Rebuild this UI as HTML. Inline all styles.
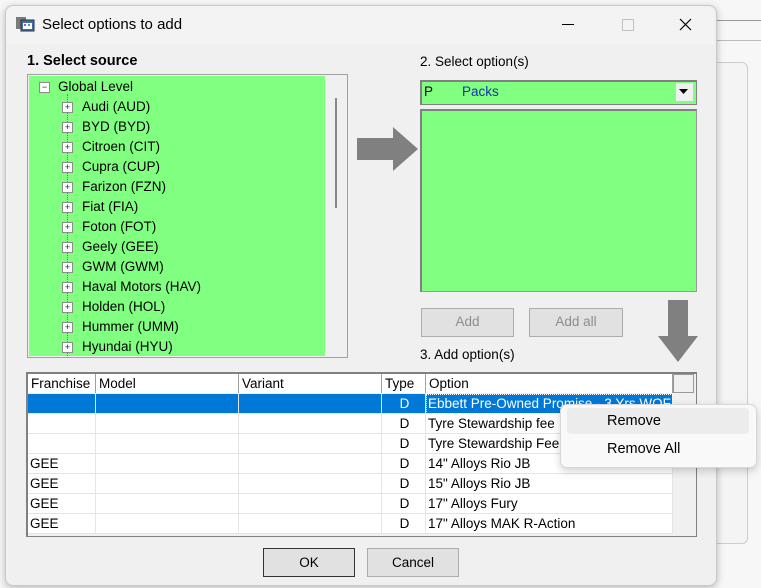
<!DOCTYPE html>
<html><head><style>
body{margin:0;width:761px;height:588px;background:#f7f7f7;position:relative;overflow:hidden;font-family:"Liberation Sans",sans-serif;font-size:13.5px;color:#000}
.a{position:absolute}
.dlg{left:5px;top:5px;width:710px;height:579px;background:#f0f0f0;border:1px solid #c8c8c8;border-radius:8px;box-shadow:0 2px 8px rgba(0,0,0,.25)}
.tree div{position:absolute;white-space:nowrap}
.pb{position:absolute;width:9px;height:9px;border:1px solid #8c8c8c;background:#fff;font-size:9px;line-height:9px;text-align:center;color:#224}
.btn{position:absolute;background:#e1e1e1;border:1px solid #adadad;text-align:center;line-height:26px}
.hd{position:absolute;top:0;height:19px;line-height:19px;border-right:1px solid #a0a0a0;padding-left:3px;box-sizing:border-box;background:#fff}
.row{position:absolute;left:0;width:645px;height:20px;border-bottom:1px solid #e4e4e4;box-sizing:border-box}
.c{position:absolute;top:0;height:20px;line-height:20px;border-right:1px solid #e4e4e4;box-sizing:border-box;padding-left:2px;white-space:nowrap;overflow:hidden}
</style></head><body>
<div class="a" style="left:716px;top:20px;width:45px;height:1px;background:#999"></div>
<div class="a" style="left:716px;top:40px;width:45px;height:1px;background:#bbb"></div>
<div class="a" style="left:700px;top:62px;width:46px;height:480px;background:#f4f4f4;border:1px solid #ccc;border-radius:6px"></div>
<div class="a dlg"></div>
<div class="a" style="left:6px;top:6px;width:708px;height:38px;background:#f3f3f3;border-radius:8px 8px 0 0"></div>
<svg class="a" style="left:15px;top:15px" width="20" height="18"><rect x="1" y="2" width="10" height="12" fill="#7a7a7a"/><rect x="6" y="5" width="13" height="11" fill="#3a6fb0" stroke="#333"/><rect x="8" y="8" width="9" height="6" fill="#fff"/><rect x="9" y="9" width="2" height="2" fill="#d040a0"/><rect x="13" y="9" width="2" height="2" fill="#40a0d0"/></svg>
<div class="a" style="left:42px;top:16px;font-size:15px">Select options to add</div>
<div class="a" style="left:562px;top:24px;width:12px;height:1px;background:#000"></div>
<div class="a" style="left:622px;top:19px;width:10px;height:10px;border:1px solid #c0c0c0"></div>
<svg class="a" style="left:679px;top:18px" width="13" height="13"><path d="M1 1L12 12M12 1L1 12" stroke="#000" stroke-width="1.2"/></svg>

<div class="a" style="left:27px;top:53px;font-weight:bold;font-size:14.5px">1. Select source</div>
<div class="a" style="left:27px;top:74px;width:319px;height:282px;border:1px solid #a0a0a0;background:#f0f0f0"></div>
<div class="a tree" style="left:29px;top:76px;width:296px;height:280px;background:#80ff80">
<div class="pb" style="left:10px;top:6px">−</div><div style="left:29px;top:3px">Global Level</div>
<div class="a" style="left:38px;top:18px;height:262px;border-left:1px dotted #777"></div>
</div>
<div class="a" style="left:335px;top:98px;width:2px;height:110px;background:#888"></div>
<div class="a tree" style="left:29px;top:76px">
<div class="pb" style="left:33px;top:26px">+</div><div style="left:53px;top:23px">Audi (AUD)</div>
<div class="pb" style="left:33px;top:46px">+</div><div style="left:53px;top:43px">BYD (BYD)</div>
<div class="pb" style="left:33px;top:66px">+</div><div style="left:53px;top:63px">Citroen (CIT)</div>
<div class="pb" style="left:33px;top:86px">+</div><div style="left:53px;top:83px">Cupra (CUP)</div>
<div class="pb" style="left:33px;top:106px">+</div><div style="left:53px;top:103px">Farizon (FZN)</div>
<div class="pb" style="left:33px;top:126px">+</div><div style="left:53px;top:123px">Fiat (FIA)</div>
<div class="pb" style="left:33px;top:146px">+</div><div style="left:53px;top:143px">Foton (FOT)</div>
<div class="pb" style="left:33px;top:166px">+</div><div style="left:53px;top:163px">Geely (GEE)</div>
<div class="pb" style="left:33px;top:186px">+</div><div style="left:53px;top:183px">GWM (GWM)</div>
<div class="pb" style="left:33px;top:206px">+</div><div style="left:53px;top:203px">Haval Motors (HAV)</div>
<div class="pb" style="left:33px;top:226px">+</div><div style="left:53px;top:223px">Holden (HOL)</div>
<div class="pb" style="left:33px;top:246px">+</div><div style="left:53px;top:243px">Hummer (UMM)</div>
<div class="pb" style="left:33px;top:266px">+</div><div style="left:53px;top:263px">Hyundai (HYU)</div>
</div>

<svg class="a" style="left:357px;top:127px" width="62" height="45"><path d="M0 11H36V0L61 22L36 44V33H0Z" fill="#808080"/></svg>
<svg class="a" style="left:657px;top:300px" width="42" height="63"><path d="M11 0H31V36H41L21 62L1 36H11Z" fill="#808080"/></svg>

<div class="a" style="left:420px;top:54px">2. Select option(s)</div>
<div class="a" style="left:420px;top:80px;width:274px;height:22px;border:1px solid #808080;border-top-width:2px;border-left-width:2px;background:#80ff80"></div>
<div class="a" style="left:424px;top:84px">P</div>
<div class="a" style="left:462px;top:84px;color:#1a33b0">Packs</div>
<div class="a" style="left:675px;top:83px;width:17px;height:18px;background:#f0f0f0;border-left:1px solid #ccc"></div>
<svg class="a" style="left:679px;top:89px" width="10" height="6"><path d="M0 0H9L4.5 5Z" fill="#000"/></svg>
<div class="a" style="left:420px;top:109px;width:274px;height:180px;border:1px solid #999;border-top:2px solid #808080;border-left:2px solid #808080;background:#80ff80"></div>

<div class="btn" style="left:421px;top:308px;width:91px;height:27px;color:#8d8d8d">Add</div>
<div class="btn" style="left:529px;top:308px;width:92px;height:27px;color:#8d8d8d">Add all</div>
<div class="a" style="left:420px;top:347px">3. Add option(s)</div>

<div class="a" style="left:26px;top:372px;width:668px;height:162px;border:1px solid #808080;border-top-width:2px;border-left-width:2px;background:#f0f0f0"></div>
<div class="a" style="left:28px;top:374px;width:645px;height:20px">
<div class="hd" style="left:0;width:68px">Franchise</div>
<div class="hd" style="left:68px;width:143px">Model</div>
<div class="hd" style="left:211px;width:143px">Variant</div>
<div class="hd" style="left:354px;width:44px">Type</div>
<div class="hd" style="left:398px;width:247px">Option</div>
</div>
<div class="a" style="left:673px;top:374px;width:19px;height:17px;border:1px solid #999;background:#f0f0f0"></div>
<div class="a" style="left:28px;top:394px;width:645px;height:140px;background:#fff">
<div class="row" style="top:0;background:#0078d7;color:#fff"><div class="c" style="left:0;width:68px"></div><div class="c" style="left:68px;width:143px"></div><div class="c" style="left:211px;width:143px"></div><div class="c" style="left:354px;width:44px;text-align:center">D</div><div class="c" style="left:398px;width:247px;outline:1px dotted #fff;outline-offset:-1px">Ebbett Pre-Owned Promise - 3 Yrs WOF &amp;</div></div>
<div class="row" style="top:20px"><div class="c" style="left:0;width:68px"></div><div class="c" style="left:68px;width:143px"></div><div class="c" style="left:211px;width:143px"></div><div class="c" style="left:354px;width:44px;text-align:center">D</div><div class="c" style="left:398px;width:247px">Tyre Stewardship fee</div></div>
<div class="row" style="top:40px"><div class="c" style="left:0;width:68px"></div><div class="c" style="left:68px;width:143px"></div><div class="c" style="left:211px;width:143px"></div><div class="c" style="left:354px;width:44px;text-align:center">D</div><div class="c" style="left:398px;width:247px">Tyre Stewardship Fee</div></div>
<div class="row" style="top:60px"><div class="c" style="left:0;width:68px">GEE</div><div class="c" style="left:68px;width:143px"></div><div class="c" style="left:211px;width:143px"></div><div class="c" style="left:354px;width:44px;text-align:center">D</div><div class="c" style="left:398px;width:247px">14" Alloys Rio JB</div></div>
<div class="row" style="top:80px"><div class="c" style="left:0;width:68px">GEE</div><div class="c" style="left:68px;width:143px"></div><div class="c" style="left:211px;width:143px"></div><div class="c" style="left:354px;width:44px;text-align:center">D</div><div class="c" style="left:398px;width:247px">15" Alloys Rio JB</div></div>
<div class="row" style="top:100px"><div class="c" style="left:0;width:68px">GEE</div><div class="c" style="left:68px;width:143px"></div><div class="c" style="left:211px;width:143px"></div><div class="c" style="left:354px;width:44px;text-align:center">D</div><div class="c" style="left:398px;width:247px">17" Alloys Fury</div></div>
<div class="row" style="top:120px"><div class="c" style="left:0;width:68px">GEE</div><div class="c" style="left:68px;width:143px"></div><div class="c" style="left:211px;width:143px"></div><div class="c" style="left:354px;width:44px;text-align:center">D</div><div class="c" style="left:398px;width:247px">17" Alloys MAK R-Action</div></div>
</div>

<div class="btn" style="left:263px;top:548px;width:90px;height:27px;border:1px solid #333;line-height:27px">OK</div>
<div class="btn" style="left:367px;top:548px;width:90px;height:27px;line-height:27px">Cancel</div>

<div class="a" style="left:560px;top:404px;width:195px;height:62px;background:#f9f9f9;border:1px solid #d8d8d8;border-radius:7px;box-shadow:0 3px 8px rgba(0,0,0,.18)"></div>
<div class="a" style="left:567px;top:408px;width:182px;height:26px;background:#ececec;border-radius:4px"></div>
<div class="a" style="left:607px;top:413px;font-size:14.5px">Remove</div>
<div class="a" style="left:607px;top:441px;font-size:14.5px">Remove All</div>
</body></html>
